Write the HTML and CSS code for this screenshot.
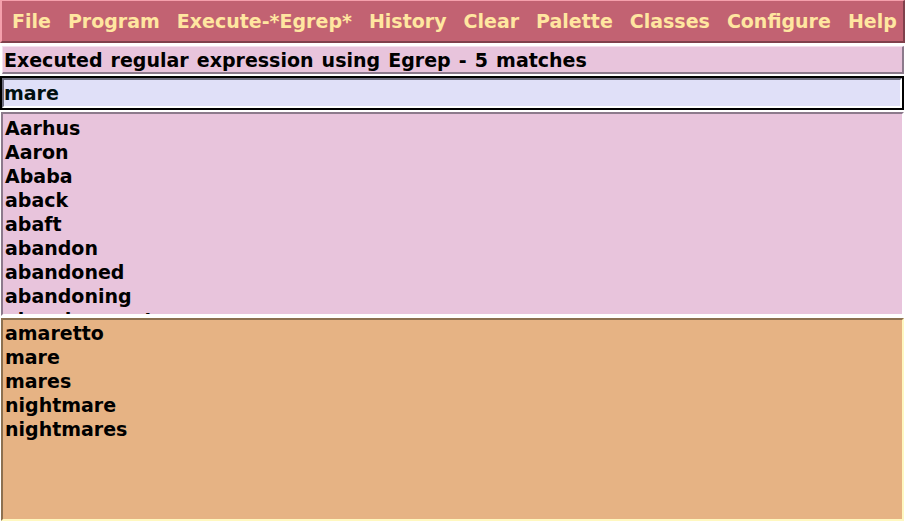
FILE: index.html
```html
<!DOCTYPE html>
<html>
<head>
<meta charset="utf-8">
<title>Egrep</title>
<link rel="stylesheet" href="styles.css">
</head>
<body>
<div class="app">
  <div class="menubar">
    <span class="menu">File</span>
    <span class="menu">Program</span>
    <span class="menu">Execute-*Egrep*</span>
    <span class="menu">History</span>
    <span class="menu">Clear</span>
    <span class="menu">Palette</span>
    <span class="menu">Classes</span>
    <span class="menu">Configure</span>
    <span class="menu">Help</span>
  </div>
  <div class="status">Executed regular expression using Egrep - 5 matches</div>
  <div class="entry-ring"><div class="entry">mare</div></div>
  <div class="list">
    <div class="row">Aarhus</div>
    <div class="row">Aaron</div>
    <div class="row">Ababa</div>
    <div class="row">aback</div>
    <div class="row">abaft</div>
    <div class="row">abandon</div>
    <div class="row">abandoned</div>
    <div class="row">abandoning</div>
    <div class="row">abandonment</div>
  </div>
  <div class="result">
    <div class="row">amaretto</div>
    <div class="row">mare</div>
    <div class="row">mares</div>
    <div class="row">nightmare</div>
    <div class="row">nightmares</div>
  </div>
</div>
</body>
</html>
```

FILE: styles.css
```css
html, body {
  margin: 0;
  padding: 0;
  background: #ffffff;
}
.app {
  width: 905px;
  height: 521px;
  overflow: hidden;
  font-family: "DejaVu Sans", sans-serif;
  font-weight: bold;
  font-size: 19px;
  display: flex;
  flex-direction: column;
}
.menubar {
  box-sizing: border-box;
  height: 43px;
  display: flex;
  align-items: center;
  background: #c26272;
  border-top: 1px solid #f4a0ac;
  border-left: 2px solid #f4a0ac;
  border-bottom: 2px solid #80404c;
  border-right: 2px solid #80404c;
  padding-left: 1.5px;
  padding-bottom: 1px;
  color: #ffe6a0;
}
.menu {
  padding: 0 8.5px;
  white-space: nowrap;
}
.status {
  box-sizing: border-box;
  margin: 3px 1px 0 2px;
  height: 28px;
  line-height: 26px;
  padding-left: 1px;
  background: #e8c4dc;
  border-top: 1px solid #f4e0ee;
  border-left: 1px solid #f4e0ee;
  border-right: 2px solid #8c7a8c;
  border-bottom: 2px solid #8c7a8c;
  color: #000000;
  white-space: nowrap;
  word-spacing: 1.5px;
}
.entry-ring {
  box-sizing: border-box;
  margin-top: 2px;
  height: 34px;
  border: 2px solid #000000;
  margin-right: 1px;
}
.entry {
  box-sizing: border-box;
  height: 30px;
  line-height: 27px;
  padding-left: 0;
  background: #e0e0f8;
  border-top: 2px solid #6e6e80;
  border-left: 2px solid #6e6e80;
  border-bottom: 2px solid #ffffff;
  border-right: 2px solid #ffffff;
  color: #001010;
}
.list {
  box-sizing: border-box;
  margin: 2px 1px 0 1px;
  height: 204px;
  padding: 2px 0 0 2px;
  background: #e8c4dc;
  border-top: 2px solid #8c7a8c;
  border-left: 2px solid #8c7a8c;
  border-bottom: 2px solid #ffffff;
  border-right: 2px solid #ffffff;
  overflow: hidden;
  color: #000000;
}
.result {
  box-sizing: border-box;
  margin: 2px 1px 0 1px;
  height: 203px;
  padding: 1px 0 0 2px;
  background: #e6b384;
  border-top: 2px solid #8c7050;
  border-left: 2px solid #8c7050;
  border-bottom: 2px solid #fff8c0;
  border-right: 2px solid #fff8c0;
  overflow: hidden;
  color: #000000;
}
.row {
  height: 24px;
  line-height: 24px;
  white-space: nowrap;
}
```
